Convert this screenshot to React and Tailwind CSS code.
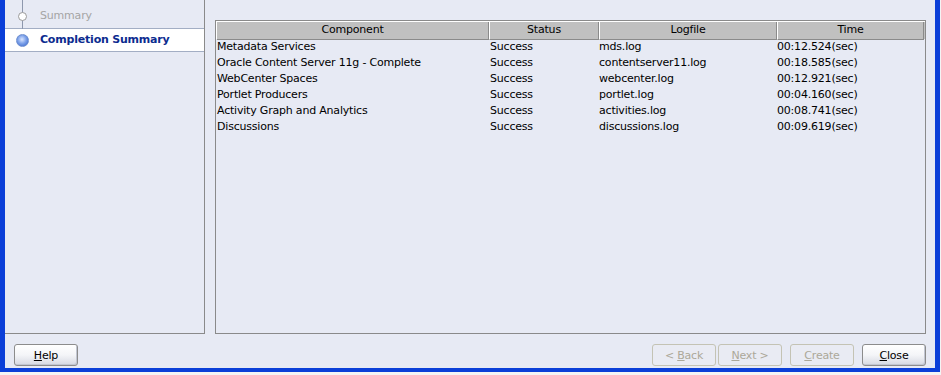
const rows = [
  ["Metadata Services", "Success", "mds.log", "00:12.524(sec)"],
  ["Oracle Content Server 11g - Complete", "Success", "contentserver11.log", "00:18.585(sec)"],
  ["WebCenter Spaces", "Success", "webcenter.log", "00:12.921(sec)"],
  ["Portlet Producers", "Success", "portlet.log", "00:04.160(sec)"],
  ["Activity Graph and Analytics", "Success", "activities.log", "00:08.741(sec)"],
  ["Discussions", "Success", "discussions.log", "00:09.619(sec)"],
];

const cols = "grid grid-cols-[272px_110px_178px_147px]";

function Btn({ children, disabled }) {
  return (
    <button
      className={
        disabled
          ? "w-[64px] h-[22px] rounded-[3px] border border-[#c4c3b4] text-[#aca899] bg-[#e9ebf3] text-[11px] leading-none pt-[1px]"
          : "w-[64px] h-[22px] rounded-[3px] border border-[#8c8c8c] text-black bg-gradient-to-b from-white via-[#f4f5f8] to-[#d6d9e2] text-[11px] leading-none pt-[1px] shadow-[inset_-1px_-1px_0_#c2c6d2]"
      }
    >
      {children}
    </button>
  );
}

export default function App() {
  return (
    <div className="w-[941px] h-[375px] bg-[#f4f4f4] overflow-hidden font-['DejaVu_Sans',sans-serif] text-[11px] tracking-[-0.2px]">
      <div className="w-[940px] h-[372px] border-l-[5px] border-r-[5px] border-b-[4px] border-[#0b3fd8] bg-[#e7eaf4] flex flex-col">
        <div className="flex h-[334px]">
          {/* left nav */}
          <div className="w-[200px] h-[334px] border-r border-b border-[#8a8a8a] relative">
            <div className="absolute left-[17px] top-0 w-px h-[40px] bg-[#8e98ad]" />
            <div className="h-[29px] flex items-center border-b border-[#a3aec4] pt-[5px]">
              <div className="w-[35px] flex justify-center relative">
                <div className="w-[9px] h-[9px] rounded-full bg-white border border-[#9a9a9a] ml-[-1px]" />
              </div>
              <span className="text-[#a5a5a5]">Summary</span>
            </div>
            <div className="h-[23px] flex items-center bg-white border-b border-[#a3aec4] relative pt-[1px]">
              <div className="w-[35px] flex justify-center">
                <div className="w-[13px] h-[13px] rounded-full border border-[#6e8fd0] bg-[radial-gradient(circle_at_45%_40%,#dbe6ff_0%,#7fa3ea_45%,#2f5fc8_100%)] ml-[-1px]" />
              </div>
              <span className="font-bold text-[#0c2b8f]">Completion Summary</span>
            </div>
          </div>
          {/* table panel */}
          <div className="ml-[10px] mt-[20px] w-[711px] h-[314px] border border-[#8a8a8a]">
            <div className={`${cols} h-[18px] bg-[#c0c0c0] border-t border-l border-white`}>
              {["Component", "Status", "Logfile", "Time"].map((h, i) => (
                <div
                  key={h}
                  className={
                    "flex items-center justify-center text-black border-r border-b border-[#8a8a8a] " +
                    (i > 0 ? "border-l border-l-white" : "")
                  }
                >
                  {h}
                </div>
              ))}
            </div>
            {rows.map((r) => (
              <div key={r[0]} className={`${cols} h-[16px] items-center text-black`}>
                <div className="pl-[1px]">{r[0]}</div>
                <div className="pl-[2px]">{r[1]}</div>
                <div className="pl-[1px]">{r[2]}</div>
                <div className="pl-[1px]">{r[3]}</div>
              </div>
            ))}
          </div>
        </div>
        {/* buttons */}
        <div className="flex items-start pt-[10px] pl-[9px]">
          <Btn>
            <span className="underline">H</span>elp
          </Btn>
          <div className="ml-auto flex gap-[2px]">
            <Btn disabled>
              &lt; <span className="underline">B</span>ack
            </Btn>
            <Btn disabled>
              <span className="underline">N</span>ext &gt;
            </Btn>
          </div>
          <div className="ml-[8px]">
            <Btn disabled>
              <span className="underline">C</span>reate
            </Btn>
          </div>
          <div className="ml-[8px] mr-[9px]">
            <Btn>
              <span className="underline">C</span>lose
            </Btn>
          </div>
        </div>
      </div>
    </div>
  );
}
